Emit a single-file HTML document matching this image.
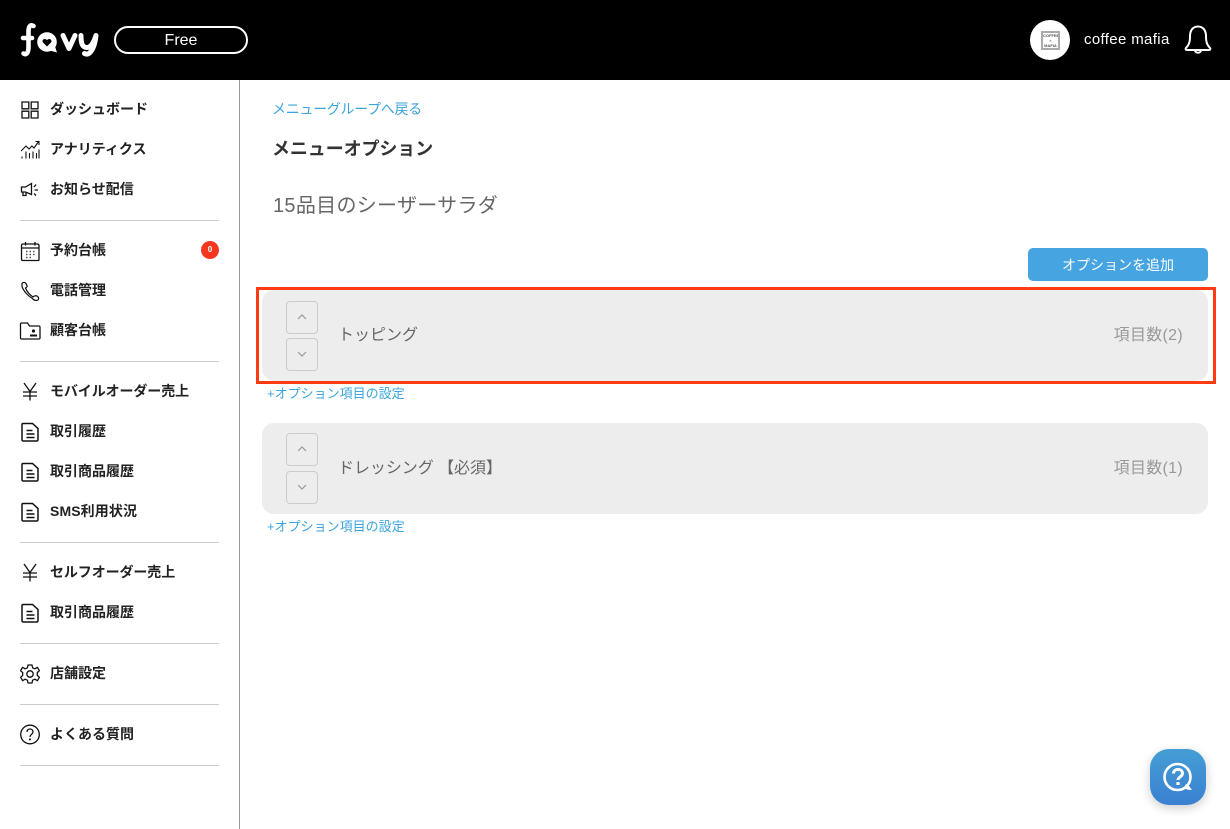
<!DOCTYPE html>
<html lang="ja"><head><meta charset="utf-8"><title>メニューオプション</title>
<style>
html,body{margin:0;padding:0;background:#fff}
body{width:1230px;height:829px;position:relative;overflow:hidden;font-family:"Liberation Sans","Noto Sans CJK JP",sans-serif}
.a{position:absolute;white-space:nowrap}
.hd{left:0;top:0;width:1230px;height:80px;background:#000}
.nav{left:50px;font-size:14px;line-height:20px;font-weight:700;color:#222}
.hr{left:20px;width:199px;height:1px;background:#ccc}
.ic{position:absolute;left:19px;width:22px;height:22px;fill:none;stroke:#111;stroke-width:1.3}
.card{left:262px;width:946px;height:91px;background:#ededed;border-radius:12px}
.bt{left:286px;width:30px;height:31px;border:1px solid #ccc;border-radius:4px}
.bt svg{position:absolute;left:9px;top:9px;width:12px;height:12px;fill:none;stroke:#999;stroke-width:1.2}
.ct{left:338px;font-size:16px;line-height:22px;color:#666}
.cn{right:47px;font-size:16px;line-height:22px;color:#999;letter-spacing:.3px}
.lk{left:267px;font-size:13px;line-height:18px;color:#3ba5dc}
</style></head><body>
<div class="a hd"></div>
<svg class="a" style="left:18px;top:20px" width="84" height="40" viewBox="0 0 84 40">
<path d="M15.500 6C12 4 10.500 7 10.500 12V27C10.500 33 8 35.500 5.500 33.500M5 18H14" fill="none" stroke="#fff" stroke-width="4.600" stroke-linecap="round"/>
<circle cx="29" cy="22" r="9.800" fill="#fff"/><path d="M30 30l9 2.500l-3-9z" fill="#fff"/>
<path d="M29 26.500l-4-4c-1.800-2.400 1.800-5 4-2.300c2.200-2.700 5.800-.1 4 2.300z" fill="#000"/>
<path d="M45 15.500l6 13l6-13M63 15.500c0 8.500 1.500 12 6 12c3 0 6-3 9-12M78 15.500c-1 9-3 14-6 17c-1.500 1.500-3.500 2-5.500 1" fill="none" stroke="#fff" stroke-width="5" stroke-linecap="round" stroke-linejoin="round"/>
</svg>
<div class="a" style="left:114px;top:26px;width:130px;height:24px;border:2px solid #fff;border-radius:14px;color:#fff;font-size:16px;line-height:25px;text-align:center">Free</div>
<div class="a" style="left:1030px;top:20px;width:40px;height:40px;border-radius:50%;background:#fff"></div>
<div class="a" style="left:1041px;top:31px;width:15px;height:15px;border:2px solid #aaa;color:#555;font-size:4px;line-height:5px;text-align:center;font-weight:700;overflow:hidden">COFFEE<br>⌢<br>MAFIA</div>
<div class="a" style="left:1084px;top:30px;color:#fff;font-size:15px;line-height:20px;letter-spacing:.35px">coffee mafia</div>
<svg class="a" style="left:1184px;top:24px" width="28" height="32" viewBox="0 0 28 32" fill="none" stroke="#fff" stroke-width="2"><path d="M14 2.500c-5.500 0-8 4.500-8 9.500c0 6-1 9-4 12c-.8 1-.3 2 1 2h22c1.300 0 1.800-1 1-2c-3-3-4-6-4-12c0-5-2.500-9.500-8-9.500z" stroke-linejoin="round"/><path d="M11 26.500c.5 3 5.500 3 6 0"/></svg>

<div class="a" style="left:239px;top:80px;width:1px;height:749px;background:#999"></div>

<svg class="ic" style="top:99px" viewBox="0 0 22 22"><path d="M3 3h6.800v6.800H3zM12.200 3H19v6.800h-6.800zM3 12.200h6.800V19H3zM12.200 12.200H19V19h-6.800z"/></svg>
<div class="a nav" style="top:99px">ダッシュボード</div>
<svg class="ic" style="top:139px;stroke-width:1.1" viewBox="0 0 22 22"><path d="M2 12l5-5 3 3 3-3 2 2 5-7M16.500 2.500H20v3.500"/><path d="M3 19.500v-2M7 19.500v-7M10.500 19.500v-5.500M14 19.500v-7M17.500 19.500v-5.500M20 19.500v-9"/></svg>
<div class="a nav" style="top:139px">アナリティクス</div>
<svg class="ic" style="top:179px" viewBox="0 0 22 22"><path d="M2.500 8h4l6-3.500v11L6.500 13h-4zM4 13v3.500h3V13M15 8l2-2.500M15.500 11h3.500M15 14.500l2 2"/></svg>
<div class="a nav" style="top:179px">お知らせ配信</div>
<div class="a hr" style="top:220px"></div>

<svg class="ic" style="top:240px" viewBox="0 0 22 22"><path d="M4 4h14c1 0 2 .5 2 1.500V19.500c0 .6-.5 1-1 1H4c-1 0-1.500-.5-1.500-1V5.500C2.500 4.500 3 4 4 4zM2.500 8h17.500M6.500 2v3.500M16 2v3.500"/><path stroke="#555" stroke-width="1.500" d="M7 11.500h1.500M10.500 11.500h1.500M14 11.500h1.500M7 14.500h1.500M10.500 14.500h1.500M14 14.500h1.500M7 17.500h1.500M10.500 17.500h1.500"/></svg>
<div class="a nav" style="top:240px">予約台帳</div>
<div class="a" style="left:201px;top:241px;width:18px;height:18px;border-radius:50%;background:#f5371f;color:#fff;font-size:8px;line-height:18px;text-align:center;font-weight:700">0</div>
<svg class="ic" style="top:280px" viewBox="0 0 22 22"><path d="M3 3.500c1-1.500 3-1.500 4 0l1 2c.5 1-.5 2-1.500 2.500c1.500 4 4 6.500 7.500 9c1-1 2.500-1.500 4-1l1.500 1.500c.5 1.500-.5 3-2 3s-3-.5-4-2C9 16 4.500 11 3 6.500z" stroke-width="1.200"/></svg>
<div class="a nav" style="top:280px">電話管理</div>
<svg class="ic" style="top:320px" viewBox="0 0 22 22"><path d="M2.500 3h6l2 3h9.500c.5 0 1 .5 1 1v11c0 .5-.5 1-1 1H2.500c-.5 0-1-.5-1-1V4c0-.5.500-1 1-1z"/><circle cx="14.500" cy="11" r="1.600" fill="#111" stroke="none"/><path d="M11 15.500h7" stroke-width="2"/></svg>
<div class="a nav" style="top:320px">顧客台帳</div>
<div class="a hr" style="top:361px"></div>

<svg class="ic" style="top:381px" viewBox="0 0 22 22"><path d="M5 2l6 8.500 6-8.500M11 10.500v9M4 11h14M4 15h14"/></svg>
<div class="a nav" style="top:381px;letter-spacing:-.1px">モバイルオーダー売上</div>
<svg class="ic" style="top:421px" viewBox="0 0 22 22"><path d="M4 2.500h9.500l5.500 5v11c0 .8-.5 1.500-1.500 1.500H4.500c-1 0-1.500-.7-1.500-1.500V3.500c0-.6.400-1 1-1zM7.500 9.500h6M7.500 13h8M7.500 16.500h8" stroke-width="1.500"/></svg>
<div class="a nav" style="top:421px">取引履歴</div>
<svg class="ic" style="top:461px" viewBox="0 0 22 22"><path d="M4 2.500h9.500l5.500 5v11c0 .8-.5 1.500-1.500 1.500H4.500c-1 0-1.500-.7-1.500-1.500V3.500c0-.6.400-1 1-1zM7.500 9.500h6M7.500 13h8M7.500 16.500h8" stroke-width="1.500"/></svg>
<div class="a nav" style="top:461px">取引商品履歴</div>
<svg class="ic" style="top:501px" viewBox="0 0 22 22"><path d="M4 2.500h9.500l5.500 5v11c0 .8-.5 1.500-1.500 1.500H4.500c-1 0-1.500-.7-1.500-1.500V3.500c0-.6.400-1 1-1zM7.500 9.500h6M7.500 13h8M7.500 16.500h8" stroke-width="1.500"/></svg>
<div class="a nav" style="top:501px;letter-spacing:.1px">SMS利用状況</div>
<div class="a hr" style="top:542px"></div>

<svg class="ic" style="top:562px" viewBox="0 0 22 22"><path d="M5 2l6 8.500 6-8.500M11 10.500v9M4 11h14M4 15h14"/></svg>
<div class="a nav" style="top:562px;letter-spacing:-.1px">セルフオーダー売上</div>
<svg class="ic" style="top:602px" viewBox="0 0 22 22"><path d="M4 2.500h9.500l5.500 5v11c0 .8-.5 1.500-1.500 1.500H4.500c-1 0-1.500-.7-1.500-1.500V3.500c0-.6.400-1 1-1zM7.500 9.500h6M7.500 13h8M7.500 16.500h8" stroke-width="1.500"/></svg>
<div class="a nav" style="top:602px">取引商品履歴</div>
<div class="a hr" style="top:643px"></div>

<svg class="ic" style="top:663px" viewBox="0 0 22 22"><circle cx="11" cy="11" r="3.200"/><path d="M9 2h4l.6 2.800 2.300 1 2.500-1.500 2 3.400-2.100 1.900v2.800l2.100 1.900-2 3.400-2.500-1.500-2.300 1L13 20H9l-.6-2.800-2.300-1-2.500 1.500-2-3.400 2.100-1.900V9.600L1.600 7.700l2-3.400 2.500 1.500 2.300-1z" stroke-linejoin="round"/></svg>
<div class="a nav" style="top:663px">店舗設定</div>
<div class="a hr" style="top:704px"></div>
<svg class="ic" style="top:723px" viewBox="0 0 22 22"><circle cx="11" cy="11.500" r="9.300"/><path d="M8 9c0-4 6-4 6 0c0 2-3 2.500-3 5"/><path d="M11 15.500v1.800" stroke-width="1.800"/></svg>
<div class="a nav" style="top:724px">よくある質問</div>
<div class="a hr" style="top:765px"></div>

<div class="a" style="left:272px;top:99px;font-size:14px;line-height:20px;color:#3ba5dc;letter-spacing:-.3px">メニューグループへ戻る</div>
<div class="a" style="left:272px;top:137px;font-size:18px;line-height:24px;font-weight:700;color:#333;letter-spacing:-.1px">メニューオプション</div>
<div class="a" style="left:273px;top:192px;font-size:20px;line-height:28px;color:#666;letter-spacing:.3px">15品目のシーザーサラダ</div>
<div class="a" style="left:1028px;top:248px;width:180px;height:33px;border-radius:5px;background:#46a5e0;color:#fff;font-size:14px;line-height:34px;text-align:center">オプションを追加</div>

<div class="a card" style="top:290px"></div>
<div class="a bt" style="top:301px"><svg viewBox="0 0 12 12"><path d="M2 8l4-4 4 4"/></svg></div>
<div class="a bt" style="top:338px"><svg viewBox="0 0 12 12"><path d="M2 4l4 4 4-4"/></svg></div>
<div class="a ct" style="top:325px">トッピング</div>
<div class="a cn" style="top:325px">項目数(2)</div>
<div class="a" style="left:256px;top:287px;width:954px;height:91px;border:3px solid #ff3b14"></div>
<div class="a lk" style="top:385px">+オプション項目の設定</div>

<div class="a card" style="top:423px"></div>
<div class="a bt" style="top:433px"><svg viewBox="0 0 12 12"><path d="M2 8l4-4 4 4"/></svg></div>
<div class="a bt" style="top:471px"><svg viewBox="0 0 12 12"><path d="M2 4l4 4 4-4"/></svg></div>
<div class="a ct" style="top:458px;letter-spacing:-.05px">ドレッシング 【必須】</div>
<div class="a cn" style="top:458px">項目数(1)</div>
<div class="a lk" style="top:518px">+オプション項目の設定</div>

<div class="a" style="left:1150px;top:749px;width:56px;height:56px;border-radius:19px;background:linear-gradient(#449ed4,#3b80d2);box-shadow:0 3px 10px rgba(0,0,0,.2)"></div>
<svg class="a" style="left:1162px;top:761px" width="34" height="32" viewBox="0 0 34 32" fill="none" stroke="#fff" stroke-width="2.600"><circle cx="15.500" cy="16" r="13"/><path d="M24 23l2.500 1.500 3.500 4.500c-3 .2-6-.5-8-2z" fill="#fff" stroke="none"/><path d="M11.500 12.500c0-5.500 9-5.500 9 0c0 3-4.500 3.500-4.500 6.500" stroke-width="3"/><path d="M16 21v3" stroke-width="3.200"/></svg>
</body></html>
